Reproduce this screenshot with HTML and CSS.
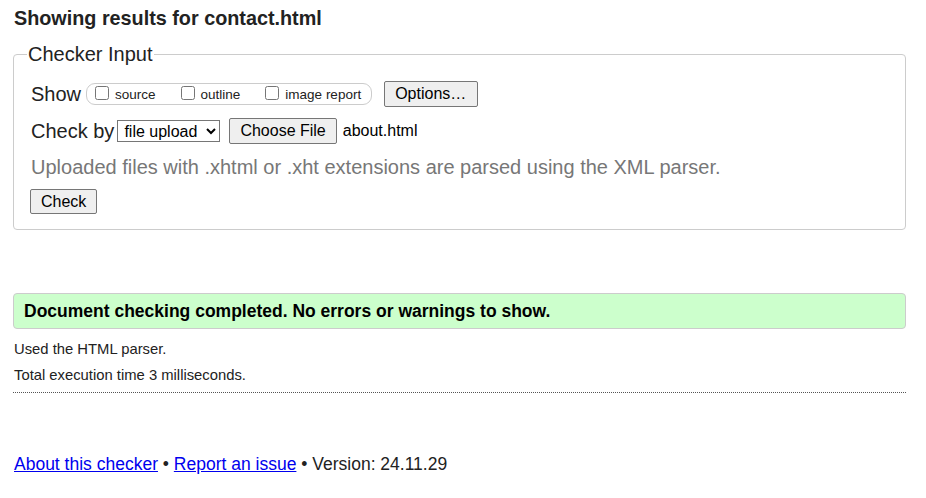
FILE: index.html
```html
<!DOCTYPE html>
<html lang="en">
<head>
<meta charset="utf-8">
<title>Showing results for contact.html - Nu Html Checker</title>
<link rel="stylesheet" href="styles.css">
</head>
<body>
<h2 class="title">Showing results for contact.html</h2>
<fieldset class="checker">
  <legend class="legend">Checker Input</legend>
  <div class="row">
    <span class="label">Show</span>
    <span class="show-group">
      <label class="opt"><input type="checkbox" class="cb">source</label>
      <label class="opt"><input type="checkbox" class="cb">outline</label>
      <label class="opt"><input type="checkbox" class="cb">image report</label>
    </span>
    <button class="btn btn-options" type="button">Options…</button>
  </div>
  <div class="row row-check">
    <span class="label">Check by</span>
    <select class="sel"><option>file upload</option></select>
    <button class="btn btn-file" type="button">Choose File</button>
    <span class="filename">about.html</span>
  </div>
  <p class="hint">Uploaded files with .xhtml or .xht extensions are parsed using the XML parser.</p>
  <button class="btn btn-check" type="submit">Check</button>
</fieldset>

<p class="success">Document checking completed. No errors or warnings to show.</p>
<p class="details">Used the HTML parser.</p>
<p class="details">Total execution time 3 milliseconds.</p>
<hr class="sep">

<p class="footer"><a href="#">About this checker</a> • <a href="#">Report an issue</a> • Version: 24.11.29</p>
</body>
</html>
```
FILE: styles.css
```css
html, body {
  background: #fff;
}
body {
  margin: 0;
  padding: 0 20px 0 13px;
  font-family: "Liberation Sans", Arial, sans-serif;
  color: #222;
}
.title {
  margin: 6px 0 0 1px;
  font-size: 19.8px;
  line-height: 24px;
  font-weight: bold;
}
.checker {
  margin: 13px 0 0 0;
  padding: 16px 17px 15px 17px;
  border: 1px solid #ccc;
  border-radius: 4px;
}
.legend {
  padding: 0 1px;
  margin-left: -4px;
  font-size: 20px;
  line-height: 22px;
}
.row {
  display: flex;
  align-items: center;
  height: 26px;
}
.row-check {
  margin-top: 11px;
}
.label {
  font-size: 20px;
}
.show-group {
  display: inline-flex;
  align-items: center;
  height: 20px;
  margin-left: 5px;
  padding: 0 10px 0 8px;
  border: 1px solid #ccc;
  border-radius: 9px;
  font-size: 13.5px;
}
.opt {
  display: inline-flex;
  align-items: center;
  margin-right: 25px;
}
.opt:last-child {
  margin-right: 0;
}
.cb {
  width: 14px;
  height: 14px;
  margin: 0 6px 3px 0;
}
.btn {
  font-family: "Liberation Sans", Arial, sans-serif;
  font-size: 16px;
  color: #000;
  background: #efefef;
  border: 1px solid #767676;
  border-radius: 2px;
  padding: 3px 10px;
  line-height: 18px;
}
.btn-options {
  margin-left: 12px;
  padding: 3px 11px 3px 10px;
}
.sel {
  margin-left: 3px;
  width: 103px;
  height: 22px;
  font-family: "Liberation Sans", Arial, sans-serif;
  font-size: 16px;
  color: #000;
  border: 1px solid #767676;
  border-radius: 0;
  background: #fff;
  padding: 0 0 0 2px;
}
.btn-file {
  margin-left: 9px;
}
.filename {
  margin-left: 6px;
  font-size: 16px;
  color: #000;
}
.hint {
  margin: 10px 0 9px 0;
  font-size: 20px;
  line-height: 26px;
  color: #777;
}
.btn-check {
  margin-left: -1px;
  padding: 3px 10px;
  line-height: 17px;
}
.success {
  margin: 63px 0 0 0;
  padding: 7px 10px;
  background: #cfc;
  border: 1px solid #ccc;
  border-radius: 4px;
  font-size: 17.5px;
  font-weight: bold;
  line-height: 20px;
  color: #000;
}
.details {
  margin: 12px 0 0 1px;
  font-size: 14.8px;
  line-height: 16px;
}
.details + .details {
  margin-top: 10px;
}
.sep {
  margin: 9px 0 0 0;
  border: 0;
  border-top: 1px dotted #555;
  height: 0;
}
.footer {
  margin: 60px 0 0 1px;
  font-size: 17.5px;
  line-height: 22px;
}
.footer a {
  color: #00e;
}
```
